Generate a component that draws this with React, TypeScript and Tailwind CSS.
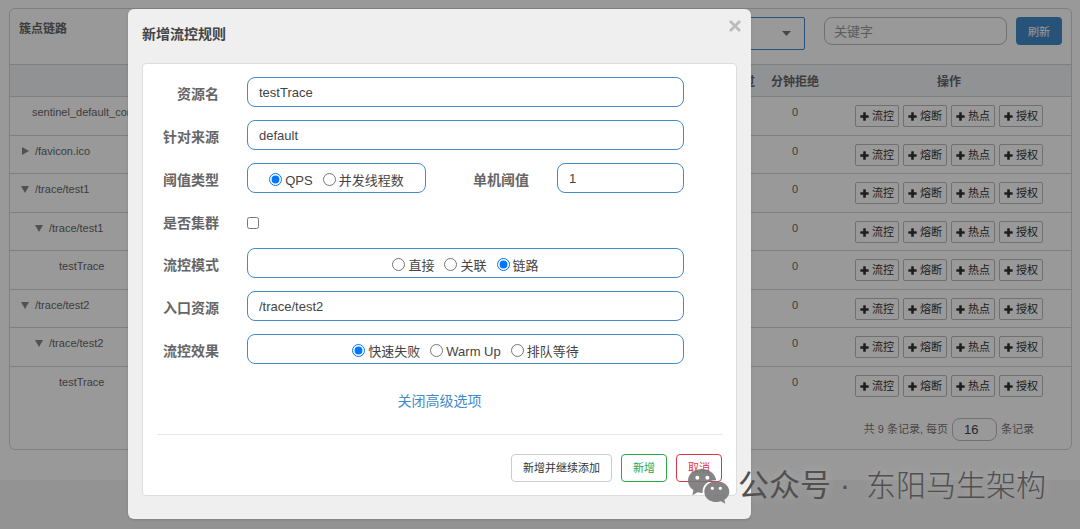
import React, { useState } from 'react';

interface ResourceRow {
    id: string;
    name: string;
    level: string;
    icon: 'open' | 'closed' | null;
    blocked: number;
}

const rows: ResourceRow[] = [
    { id: 'r1', name: 'sentinel_default_context', level: 'pl-[22px]', icon: null, blocked: 0 },
    { id: 'r2', name: '/favicon.ico', level: 'pl-[11px]', icon: 'closed', blocked: 0 },
    { id: 'r3', name: '/trace/test1', level: 'pl-[11px]', icon: 'open', blocked: 0 },
    { id: 'r4', name: '/trace/test1', level: 'pl-[25px]', icon: 'open', blocked: 0 },
    { id: 'r5', name: 'testTrace', level: 'pl-[49px]', icon: null, blocked: 0 },
    { id: 'r6', name: '/trace/test2', level: 'pl-[11px]', icon: 'open', blocked: 0 },
    { id: 'r7', name: '/trace/test2', level: 'pl-[25px]', icon: 'open', blocked: 0 },
    { id: 'r8', name: 'testTrace', level: 'pl-[49px]', icon: null, blocked: 0 },
];

const actions = ['流控', '熔断', '热点', '授权'];

const fieldClass =
    'h-[30px] w-full min-w-0 rounded-lg border border-[#428bca] bg-white px-[11px] text-[13px] text-[#444] outline-none';

const PlusIcon = () => (
    <svg width="9" height="9" viewBox="0 0 9 9" fill="currentColor" aria-hidden="true">
        <path d="M3.2.8Q3.2.3 3.7.3h1.6q.5 0 .5.5v2.4h2.4q.5 0 .5.5v1.6q0 .5-.5.5H5.800v2.400q0 .5-.5.5H3.700q-.5 0-.5-.5V5.800H.8q-.5 0-.5-.5V3.700q0-.5.5-.5h2.400z" />
    </svg>
);

const Triangle = ({ open }: { open: boolean }) => (
    <svg width="8" height="8" viewBox="0 0 8 8" fill="#888" aria-hidden="true">
        <path d={open ? 'M0 1h8L4 8z' : 'M1 0v8l7-4z'} />
    </svg>
);

const ResourcePanel = () => (
    <section className="rounded-md border border-[#d4d4d4] bg-white">
        <div className="flex h-[55px] items-start pt-2 pr-[9px] pl-[9px]">
            <h1 className="flex-1 pt-1 text-xs leading-4 font-bold text-[#666]">簇点链路</h1>
            <div className="relative mr-[19px]">
                <select
                    aria-label="机器"
                    className="block h-[33px] w-40 appearance-none rounded-xs border border-[#428bca] bg-white"
                />
                <svg className="pointer-events-none absolute top-[14px] right-[14px]" width="9" height="5" viewBox="0 0 9 5" fill="#777">
                    <path d="M0 0h9L4.500 5z" />
                </svg>
            </div>
            <input
                aria-label="关键字"
                placeholder="关键字"
                className="mr-[9px] h-[28px] w-[183px] rounded-lg border border-[#bbb] bg-white px-[9px] text-[13px] placeholder:text-[#999]"
            />
            <button className="h-[28px] rounded bg-[#428bca] px-3 pt-0.5 text-[11px] text-white">刷新</button>
        </div>

        <table className="w-full table-fixed border-collapse text-[11px] text-[#666]">
            <thead>
                <tr className="h-8 border-y border-[#d4d4d4] bg-[#f2f3f7] text-xs">
                    <th />
                    <th className="w-16 pt-0.5 font-bold whitespace-nowrap">分钟通过</th>
                    <th className="w-16 pt-0.5 font-bold whitespace-nowrap">分钟拒绝</th>
                    <th className="w-[244px] pt-0.5 font-bold">操作</th>
                </tr>
            </thead>
            <tbody>
                {rows.map((row) => (
                    <tr key={row.id} className="border-b border-[#d4d4d4] align-top last:border-b-0 odd:h-[39px] even:h-[38px]">
                        <td className={`pt-[7px] leading-4 ${row.level}`}>
                            <span className="flex items-center gap-1.5">
                                {row.icon && <Triangle open={row.icon === 'open'} />}
                                {row.name}
                            </span>
                        </td>
                        <td />
                        <td className="pt-[7px] text-center leading-4">{row.blocked}</td>
                        <td className="pt-2">
                            <div className="flex justify-center gap-1">
                                {actions.map((a) => (
                                    <button
                                        key={a}
                                        className="flex h-[22px] items-center gap-[3px] rounded-xs border border-[#bbb] px-1 text-[11px] text-[#333]"
                                    >
                                        <PlusIcon />
                                        {a}
                                    </button>
                                ))}
                            </div>
                        </td>
                    </tr>
                ))}
            </tbody>
        </table>

        <div className="flex items-center justify-end gap-1 pt-[13px] pr-[37px] pb-2 text-[11px] text-[#777]">
            <label htmlFor="page-size">共 9 条记录, 每页</label>
            <input
                id="page-size"
                defaultValue="16"
                className="h-[23px] w-[45px] rounded-lg border border-[#bbb] bg-white px-[11px] text-[13px] text-[#444]"
            />
            <span>条记录</span>
        </div>
    </section>
);

const FormRow = ({ label, htmlFor, children }: { label: string; htmlFor?: string; children: React.ReactNode }) => (
    <div className="grid grid-cols-[76px_1fr] gap-7">
        <label htmlFor={htmlFor} className="pt-[7px] text-right text-sm leading-5 font-bold text-[#666]">
            {label}
        </label>
        {children}
    </div>
);

interface RadioGroupProps {
    name: string;
    options: string[];
    value: string;
    onChange: (value: string) => void;
}

const RadioGroup = ({ name, options, value, onChange }: RadioGroupProps) => (
    <div
        role="radiogroup"
        className="flex h-[30px] flex-1 items-center justify-center rounded-lg border border-[#428bca] pt-[5px] text-[13px] text-[#444]"
    >
        {options.map((option) => (
            <label key={option} className="flex items-center gap-[3px] whitespace-nowrap not-last:mr-2.5">
                <input
                    type="radio"
                    name={name}
                    checked={value === option}
                    onChange={() => onChange(option)}
                    className="mb-[3px] size-[13px]"
                />
                {option}
            </label>
        ))}
    </div>
);

const FlowRuleDialog = () => {
    const [grade, setGrade] = useState('QPS');
    const [strategy, setStrategy] = useState('链路');
    const [behavior, setBehavior] = useState('快速失败');

    return (
        <div role="dialog" aria-labelledby="dialog-title" className="w-full max-w-[623px] rounded-md bg-[#efefef] px-3.5 pb-[23px] shadow-sm">
            <div className="flex h-[54px] items-start justify-between">
                <h2 id="dialog-title" className="pt-[15px] text-sm leading-5 font-bold text-[#444]">新增流控规则</h2>
                <button aria-label="关闭" className="-mr-1 pt-[11px] text-[#bbb]">
                    <svg width="12" height="12" viewBox="0 0 12 12" stroke="currentColor" strokeWidth="2.8">
                        <path d="M1 1l10 10M11 1L1 11" />
                    </svg>
                </button>
            </div>

            <form className="rounded border border-[#ddd] bg-white pb-[13px]" onSubmit={(e) => e.preventDefault()}>
                <div className="flex flex-col gap-[13px] pt-[13px] pr-[52px]">
                    <FormRow label="资源名" htmlFor="resource">
                        <input id="resource" defaultValue="testTrace" className={fieldClass} />
                    </FormRow>
                    <FormRow label="针对来源" htmlFor="limit-app">
                        <input id="limit-app" defaultValue="default" className={fieldClass} />
                    </FormRow>
                    <FormRow label="阈值类型">
                        <div className="flex">
                            <RadioGroup name="grade" options={['QPS', '并发线程数']} value={grade} onChange={setGrade} />
                            <label htmlFor="count" className="w-[103px] pt-[7px] text-right text-sm leading-5 font-bold text-[#666]">
                                单机阈值
                            </label>
                            <div className="ml-7 w-[127px]">
                                <input id="count" defaultValue="1" className={fieldClass} />
                            </div>
                        </div>
                    </FormRow>
                    <FormRow label="是否集群" htmlFor="cluster">
                        <div className="flex h-[29px] items-center pt-1">
                            <input id="cluster" type="checkbox" className="size-3" />
                        </div>
                    </FormRow>
                    <FormRow label="流控模式">
                        <RadioGroup name="strategy" options={['直接', '关联', '链路']} value={strategy} onChange={setStrategy} />
                    </FormRow>
                    <FormRow label="入口资源" htmlFor="ref-resource">
                        <input id="ref-resource" defaultValue="/trace/test2" className={fieldClass} />
                    </FormRow>
                    <FormRow label="流控效果">
                        <RadioGroup name="behavior" options={['快速失败', 'Warm Up', '排队等待']} value={behavior} onChange={setBehavior} />
                    </FormRow>
                </div>

                <div className="mx-3.5 mt-[27px] border-b border-[#e5e5e5] pb-[23px] text-center text-sm leading-5">
                    <a href="#" className="text-[#428bca]">关闭高级选项</a>
                </div>

                <div className="mx-3.5 mt-[19px] flex justify-end gap-[9px] text-[11px]">
                    <button type="button" className="h-[28px] rounded border border-[#ccc] px-[11px] text-[#333]">新增并继续添加</button>
                    <button type="submit" className="h-[28px] rounded border border-[#28a745] px-[11px] text-[#28a745]">新增</button>
                    <button type="button" className="h-[28px] rounded border border-[#dc3545] px-[11px] text-[#dc3545]">取消</button>
                </div>
            </form>
        </div>
    );
};

const AccountMark = () => (
    <div className="pointer-events-none absolute right-[34px] bottom-[21px] flex items-center text-[30px] leading-[44px] whitespace-nowrap text-[#505050]">
        <svg className="mr-2" width="42" height="35" viewBox="0 0 126 105" fill="#777" fillOpacity="0.9">
            <path
                fillRule="evenodd"
                d="M42 0C18 0 0 15 0 35c0 12 6 21 16 28l-3 16 16-9c5 1 10 2 15 2-3-21 14-38 38-38l3 0C81 14 64 0 42 0zM28 20a6 6 0 1 1 0 12 6 6 0 0 1 0-12zM58 20a6 6 0 1 1 0 12 6 6 0 0 1 0-12z"
            />
            <path
                fillRule="evenodd"
                d="M86 37c-21 0-37 13-37 31s16 31 37 31c4 0 9-1 13-2l13 7-3-12c9-6 15-14 15-24 0-18-17-31-38-31zM73 53a5 5 0 1 1 0 10 5 5 0 0 1 0-10zM97 53a5 5 0 1 1 0 10 5 5 0 0 1 0-10z"
            />
        </svg>
        <span className="text-[31px] text-shadow-[0_0_12px_rgb(255_255_255/0.25)]">公众号 ·</span>
        <span className="ml-4 font-light text-shadow-[0_0_12px_rgb(255_255_255/0.25)]">东阳马生架构</span>
    </div>
);

export default function App() {
    return (
        <div className="relative flex min-h-screen flex-col bg-white font-['Liberation_Sans','Noto_Sans_CJK_SC',sans-serif]">
            <main className="pt-2 pr-2 pb-[30px] pl-[9px]">
                <ResourcePanel />
            </main>
            <footer className="flex-1 bg-[#f5f5f5]" />
            <div className="absolute inset-0 bg-black/40 pt-[9px] pl-32">
                <FlowRuleDialog />
            </div>
            <AccountMark />
        </div>
    );
}
